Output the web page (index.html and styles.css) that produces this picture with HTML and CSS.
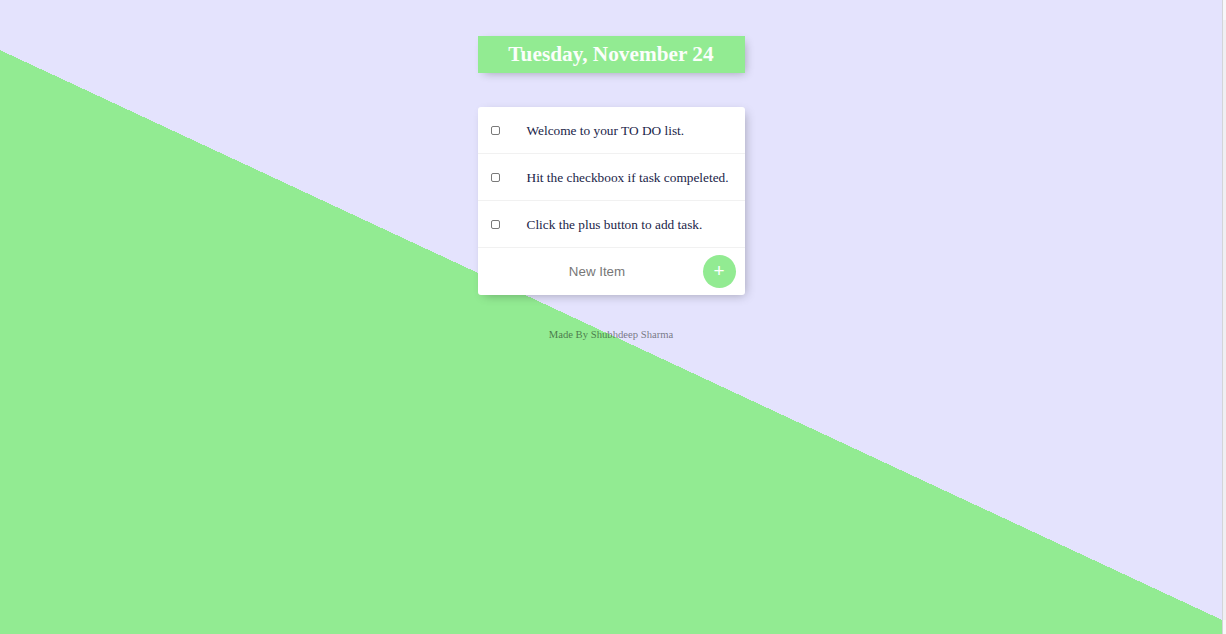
FILE: index.html
```html
<!DOCTYPE html>
<html lang="en">
<head>
<meta charset="utf-8">
<title>To Do List</title>
<link rel="stylesheet" href="styles.css">
</head>
<body>
<main class="page">
  <div class="heading">
    <h1 class="heading-title">Tuesday, November 24</h1>
  </div>
  <div class="card">
    <div class="item">
      <input class="check" type="checkbox">
      <p class="item-text">Welcome to your TO DO list.</p>
    </div>
    <div class="item">
      <input class="check" type="checkbox">
      <p class="item-text">Hit the checkboox if task compeleted.</p>
    </div>
    <div class="item">
      <input class="check" type="checkbox">
      <p class="item-text">Click the plus button to add task.</p>
    </div>
    <form class="item new-item">
      <input class="new-input" type="text" name="newItem" placeholder="New Item" autocomplete="off">
      <button class="add-btn" type="button">+</button>
    </form>
  </div>
  <footer class="footer">Made By Shubhdeep Sharma</footer>
</main>
<div class="scrollbar"><div class="scrollbar-thumb"></div></div>
</body>
</html>
```
FILE: styles.css
```css
html, body {
  margin: 0;
  padding: 0;
  height: 100%;
}

body {
  display: flex;
  overflow: hidden;
  background: #e4e3fd;
}

.page {
  flex: 1;
  display: flex;
  flex-direction: column;
  align-items: center;
  padding-top: 36px;
  background: linear-gradient(25deg, #92eb92 50%, #e4e3fd 50%) 0 0 / 100% 670px no-repeat, #92eb92;
  font-family: "Liberation Serif", "Times New Roman", serif;
}

.heading {
  width: 267px;
  height: 37px;
  display: flex;
  align-items: center;
  justify-content: center;
  background: #92eb92;
  box-shadow: 3px 3px 10px -3px rgba(0, 0, 0, 0.3);
}

.heading-title {
  margin: 0;
  font-size: 21.3px;
  font-weight: bold;
  color: #fbfefb;
  line-height: 1;
}

.card {
  width: 267px;
  margin-top: 34px;
  background: #fff;
  border-radius: 3px;
  box-shadow: 3px 3px 10px -3px rgba(0, 0, 0, 0.3);
}

.item {
  height: 47px;
  box-sizing: border-box;
  display: flex;
  align-items: center;
  border-bottom: 1px solid #f1f1f1;
}

.item:last-child {
  border-bottom: 0;
}

.check {
  appearance: none;
  -webkit-appearance: none;
  width: 9px;
  height: 9px;
  margin: 0 13px;
  box-sizing: border-box;
  border: 1px solid #7a7a7a;
  border-radius: 2px;
  background: #fff;
  flex: none;
}

.item-text {
  margin: 0;
  padding: 1px 13px 0 14px;
  font-size: 13.33px;
  color: #1a2448;
}

.new-item {
  margin: 0;
  padding-left: 15px;
  gap: 1px;
}

.new-input {
  width: 209px;
  height: 40px;
  padding: 0;
  border: none;
  background: transparent;
  text-align: center;
  font-family: "Liberation Sans", Arial, sans-serif;
  font-size: 13.33px;
  color: #333;
  outline: none;
}

.new-input::placeholder {
  color: #777;
}

.add-btn {
  width: 33px;
  height: 33px;
  padding: 0 0 2px;
  border: 0;
  border-radius: 50%;
  background: #92eb92;
  color: #fff;
  font-family: "Liberation Sans", Arial, sans-serif;
  font-size: 19px;
  line-height: 1;
  display: flex;
  align-items: center;
  justify-content: center;
}

.footer {
  margin-top: 33px;
  font-size: 10.67px;
  color: rgba(0, 0, 0, 0.5);
  text-align: center;
}

.scrollbar {
  width: 3px;
  flex: none;
  border-left: 1px solid #d4d4d8;
  background: #f7f7f9;
  display: flex;
  flex-direction: column;
  padding: 20px 0 14px;
}

.scrollbar-thumb {
  flex: 1;
  background: #efeff2;
}
```
